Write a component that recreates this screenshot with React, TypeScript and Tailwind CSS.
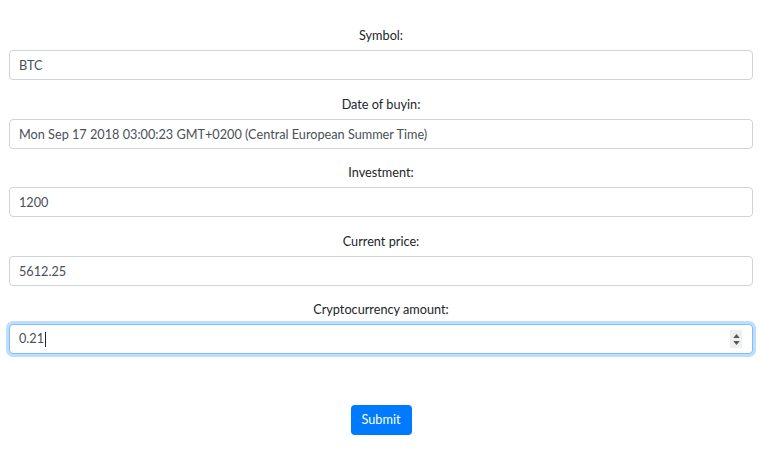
import React from "react";

const fields = [
  { label: "Symbol:", value: "BTC" },
  { label: "Date of buyin:", value: "Mon Sep 17 2018 03:00:23 GMT+0200 (Central European Summer Time)" },
  { label: "Investment:", value: "1200" },
  { label: "Current price:", value: "5612.25" },
];

export default function App() {
  return (
    <div
      className="min-h-[455px] w-[773px] bg-white pt-[26px] pl-[9px] pr-[20px] text-[12.7px] text-[#212529]"
      style={{ fontFamily: "Lato, 'Open Sans', sans-serif" }}
    >
      <form className="flex flex-col">
        {fields.map((f) => (
          <div key={f.label} className="mb-[14.5px] flex flex-col">
            <label className="mb-[6px] block h-[18px] text-center leading-[18px]">{f.label}</label>
            <input
              readOnly
              value={f.value}
              className="h-[30px] w-full rounded-[4px] border border-[#ced4da] bg-white px-[9px] text-[12.7px] text-[#495057] outline-none"
            />
          </div>
        ))}
        <div className="mb-[14px] flex flex-col">
          <label className="mb-[6px] block h-[18px] text-center leading-[18px]">Cryptocurrency amount:</label>
          <div className="relative flex h-[30px] w-full items-center rounded-[4px] border border-[#80bdff] bg-white px-[9px] text-[12.7px] text-[#495057] shadow-[0_0_0_3px_rgba(0,123,255,0.25)]">
            <span>0.21</span>
            <span className="ml-[1px] inline-block h-[15px] w-[1px] bg-[#222]" />
            <div className="absolute right-[10px] top-[5px] flex h-[18px] w-[12px] flex-col items-center justify-center gap-[3px] bg-[#efefef]">
              <svg width="7" height="4" viewBox="0 0 8 5"><path d="M0 5 L4 0 L8 5 Z" fill="#555" /></svg>
              <svg width="7" height="4" viewBox="0 0 8 5"><path d="M0 0 L4 5 L8 0 Z" fill="#555" /></svg>
            </div>
          </div>
        </div>
        <div className="mt-[37px] flex justify-center">
          <button
            type="button"
            className="h-[30px] w-[61px] rounded-[4px] bg-[#007bff] text-[12.7px] text-white"
          >
            Submit
          </button>
        </div>
      </form>
    </div>
  );
}
